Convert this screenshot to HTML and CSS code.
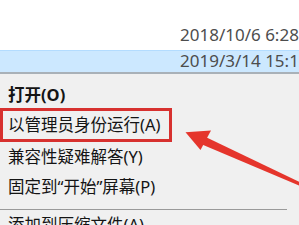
FILE: index.html
```html
<!DOCTYPE html>
<html lang="zh-CN">
<head>
<meta charset="utf-8">
<title>context menu</title>
<link rel="stylesheet" href="styles.css">
</head>
<body>
<div class="page">
  <div class="list">
    <div class="row"><span class="date">2018/10/6 6:28</span></div>
    <div class="row selected"><span class="date">2019/3/14 15:12</span></div>
  </div>
  <div class="menu">
    <div class="item bold">打开(O)</div>
    <div class="item marked">以管理员身份运行(A)</div>
    <div class="item">兼容性疑难解答(Y)</div>
    <div class="item">固定到“开始”屏幕(P)</div>
    <div class="sep"></div>
    <div class="item">添加到压缩文件(A)...</div>
  </div>
  <svg class="arrow" width="299" height="225" viewBox="0 0 299 225" aria-hidden="true">
    <polygon points="185.5,132.3 211,130.5 200.5,150" fill="#e5352c"/>
    <polygon points="198.5,143 202.5,135.5 305,184.5 304,187.5" fill="#e5352c"/>
  </svg>
</div>
</body>
</html>
```

FILE: styles.css
```css
html, body {
  margin: 0;
  padding: 0;
  overflow: hidden;
  background: #ffffff;
}
.page {
  position: relative;
  width: 299px;
  height: 225px;
  overflow: hidden;
  font-family: "Noto Sans", "Noto Sans CJK SC", sans-serif;
}
.list {
  background: #ffffff;
}
.row {
  height: 50px;
  box-sizing: border-box;
  padding: 23px 0 0 180px;
  line-height: 23px;
  white-space: nowrap;
  overflow: hidden;
}
.row.selected {
  height: 22px;
  padding-top: 0;
  line-height: 20px;
  background: #cce8ff;
  border-top: 1px solid #b3dcff;
}
.date {
  font-size: 17px;
  color: #4d4d4d;
}
.menu {
  background: #f0f0f0;
  border-top: 2px solid #a9b1b8;
  padding-top: 6px;
  height: 200px;
}
.item {
  height: 30px;
  line-height: 30px;
  padding-left: 8px;
  font-size: 16.5px;
  color: #141414;
  white-space: nowrap;
}
.item.bold {
  font-weight: 700;
}
.item.marked {
  width: 172px;
  height: 34px;
  box-sizing: border-box;
  margin: -2px 0 0;
  border: 3px solid #d7312f;
  line-height: 28px;
  padding-left: 5px;
}
.sep {
  height: 1px;
  margin: 7px 12px 0 0;
  background: #9a9a9a;
}
.arrow {
  position: absolute;
  left: 0;
  top: 0;
}
```
